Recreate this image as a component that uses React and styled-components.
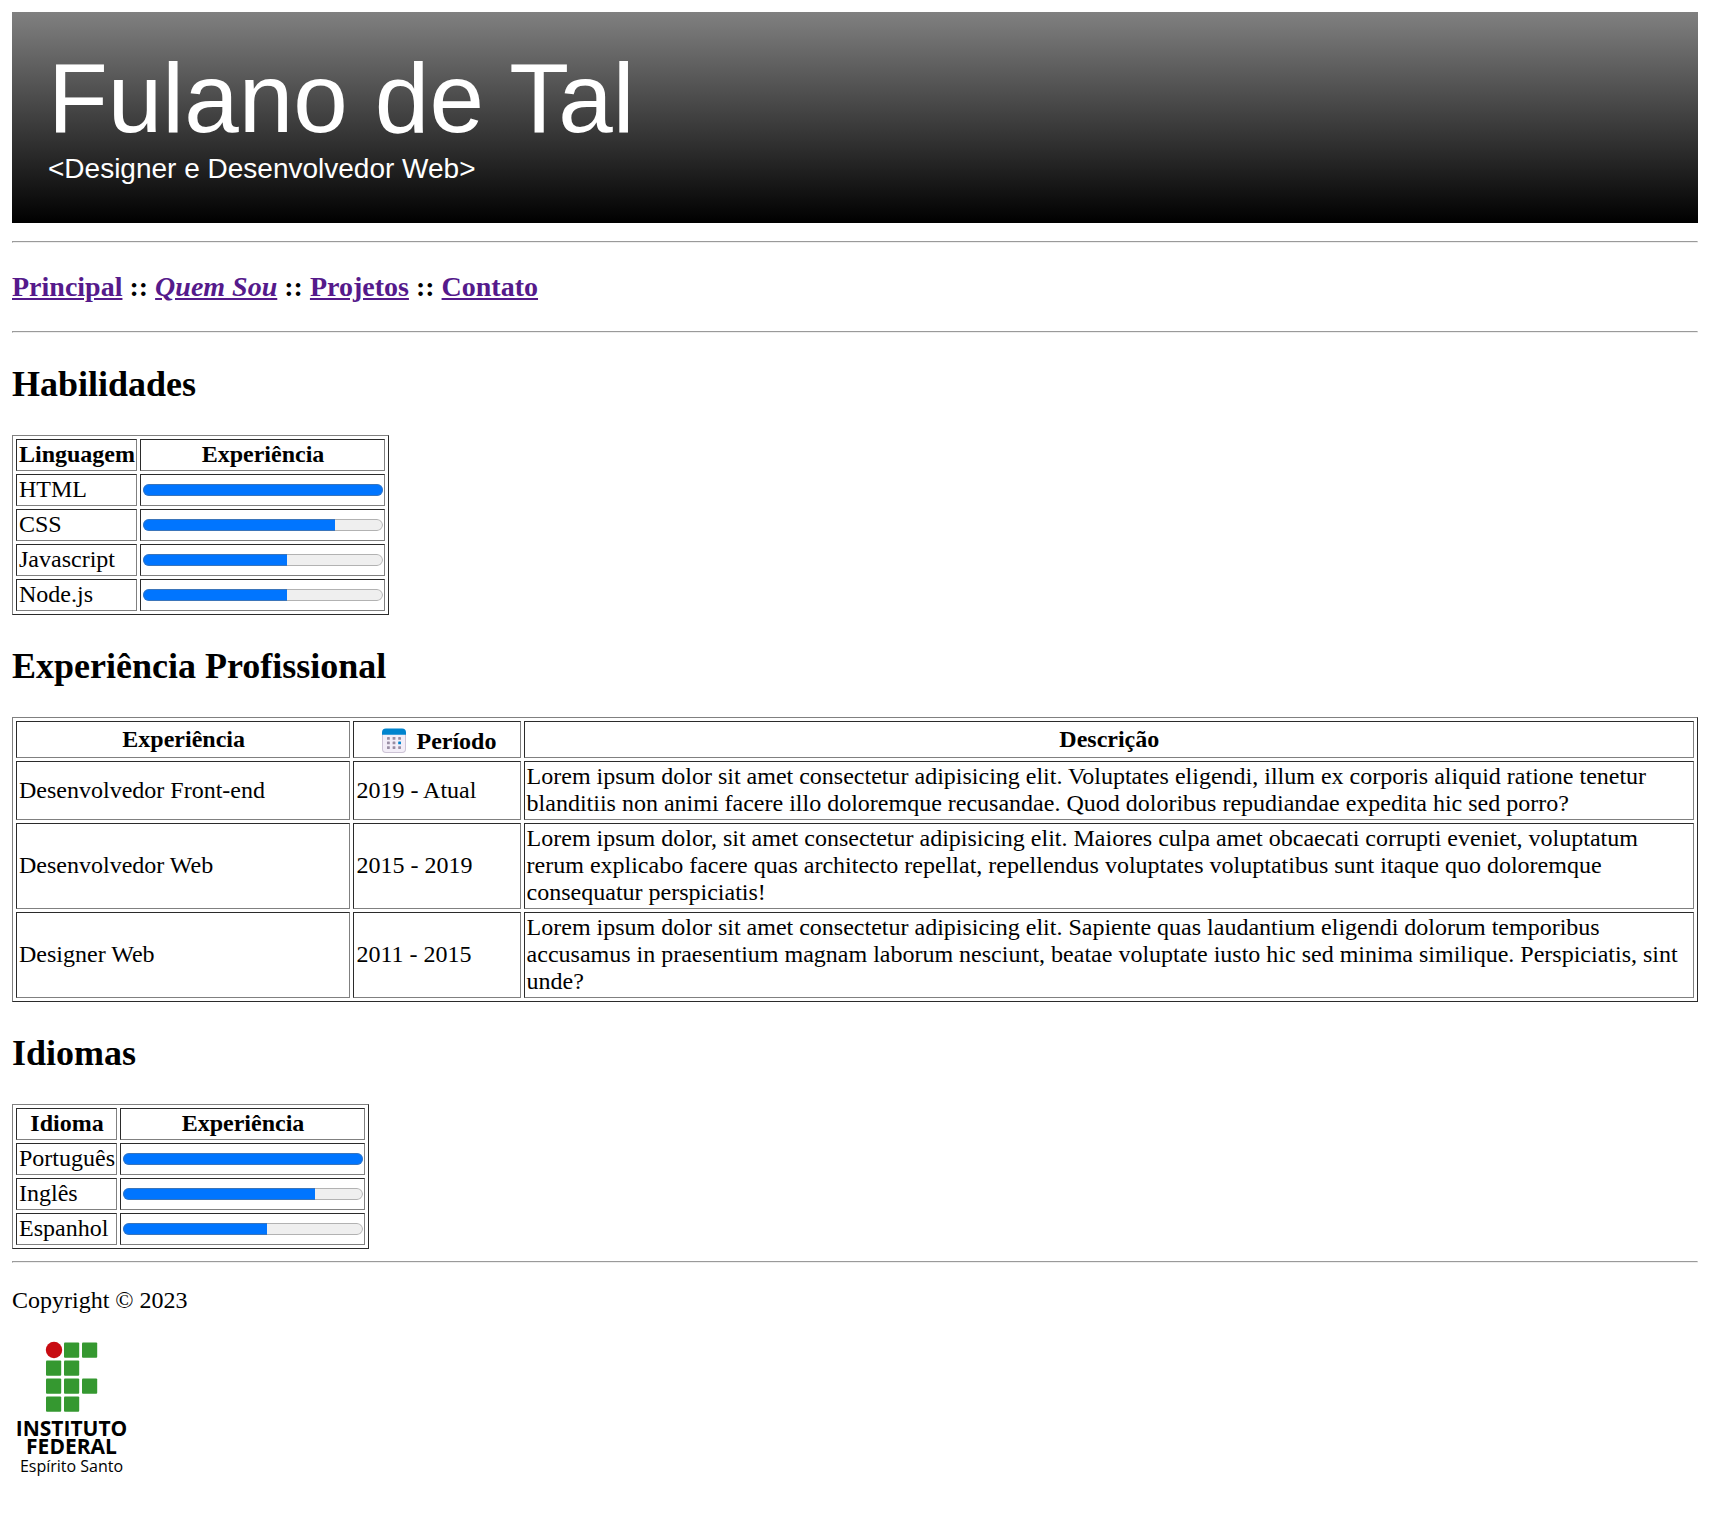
import React from "react";
import styled, { createGlobalStyle } from "styled-components";

const GlobalStyle = createGlobalStyle`
  body {
    margin: 12px;
    background: #fff;
    color: #000;
    font-family: "Liberation Serif", "Times New Roman", serif;
    font-size: 24px;
    line-height: 27px;
  }
`;

const Banner = styled.header`
  padding: 31px 36px 38px;
  background: linear-gradient(gray, #000);
  color: #fff;
  font-family: "Liberation Sans", Arial, sans-serif;
`;

const Name = styled.h1`
  margin: 0;
  font-size: 98px;
  font-weight: 400;
  line-height: 110px;
`;

const Role = styled.p`
  margin: 0;
  font-size: 28px;
  line-height: 32px;
`;

const Rule = styled.hr`
  margin: ${({ $gap = 12 }) => $gap}px 0 0;
  border-width: 1px;
`;

const Nav = styled.nav`
  margin: 28px 0;
  font-size: 28px;
  font-weight: 700;
  line-height: 32px;
`;

const NavLink = styled.a`
  color: #551a8b;
  font-style: ${({ $current }) => ($current ? "italic" : "normal")};
`;

const Heading = styled.h2`
  margin: 30px 0;
  font-size: 36px;
  line-height: 42px;
`;

const Table = styled.table`
  width: ${({ $full }) => ($full ? "100%" : "auto")};
  border: 1px solid;
  border-color: #808080 #2b2b2b #2b2b2b #808080;
  border-spacing: 3px;

  th,
  td {
    padding: 1px 1px 2px 2px;
    border: 1px solid;
    border-color: #2b2b2b #808080 #808080 #2b2b2b;
  }
`;

const Column = styled.col`
  width: ${({ $share }) => $share}%;
`;

const Meter = styled.progress`
  display: block;
  width: 240px;
  height: 24px;
`;

const PeriodLabel = styled.span`
  display: flex;
  align-items: flex-end;
  justify-content: center;
  gap: 6px;
`;

const Copyright = styled.p`
  margin: 24px 0 18px;
`;

const LogoImage = styled.svg`
  display: block;
  width: 120px;
  height: 150px;
  font-family: "Open Sans", "Noto Sans", sans-serif;
`;

const LINKS = ["Principal", "Quem Sou", "Projetos", "Contato"];

const SKILLS = [
  ["HTML", 100],
  ["CSS", 80],
  ["Javascript", 60],
  ["Node.js", 60],
];

const LANGUAGES = [
  ["Português", 100],
  ["Inglês", 80],
  ["Espanhol", 60],
];

const JOBS = [
  {
    role: "Desenvolvedor Front-end",
    period: "2019 - Atual",
    text: "Lorem ipsum dolor sit amet consectetur adipisicing elit. Voluptates eligendi, illum ex corporis aliquid ratione tenetur blanditiis non animi facere illo doloremque recusandae. Quod doloribus repudiandae expedita hic sed porro?",
  },
  {
    role: "Desenvolvedor Web",
    period: "2015 - 2019",
    text: "Lorem ipsum dolor, sit amet consectetur adipisicing elit. Maiores culpa amet obcaecati corrupti eveniet, voluptatum rerum explicabo facere quas architecto repellat, repellendus voluptates voluptatibus sunt itaque quo doloremque consequatur perspiciatis!",
  },
  {
    role: "Designer Web",
    period: "2011 - 2015",
    text: "Lorem ipsum dolor sit amet consectetur adipisicing elit. Sapiente quas laudantium eligendi dolorum temporibus accusamus in praesentium magnam laborum nesciunt, beatae voluptate iusto hic sed minima similique. Perspiciatis, sint unde?",
  },
];

function CalendarIcon() {
  return (
    <svg width="32" height="32" viewBox="0 0 32 32" aria-hidden="true">
      <rect x="4" y="7" width="24" height="23" rx="4" fill="#cdc4d6" />
      <rect x="5" y="7" width="22" height="22" rx="3" fill="#f3eef8" />
      <path d="M4 11.700V9.500a4 4 0 0 1 4-4h16a4 4 0 0 1 4 4v2.200z" fill="#0084ce" />
      {[14, 18.5, 23.2].map((y, row) =>
        [9, 14.6, 20.2].map((x, col) => (
          <rect
            key={`${x}-${y}`}
            x={x}
            y={y}
            width="2.800"
            height="2.800"
            rx="0.4"
            fill={col === 2 && row === 1 ? "#0084ce" : "#998ea4"}
          />
        ))
      )}
    </svg>
  );
}

function Logo() {
  const squares = [
    [1, 0], [2, 0],
    [0, 1], [1, 1],
    [0, 2], [1, 2], [2, 2],
    [0, 3], [1, 3],
  ];
  return (
    <LogoImage viewBox="0 0 120 150" role="img" aria-label="Instituto Federal Espírito Santo">
      <circle cx="42" cy="18" r="8.200" fill="#c80c12" />
      {squares.map(([col, row]) => (
        <rect
          key={`${col}-${row}`}
          x={34 + col * 18}
          y={10.5 + row * 18}
          width="15.200"
          height="15.200"
          rx="1"
          fill="#359830"
        />
      ))}
      <g textAnchor="middle">
        <text x="59.500" y="104" fontSize="21" fontWeight="700">INSTITUTO</text>
        <text x="59.500" y="121.500" fontSize="21" fontWeight="700">FEDERAL</text>
        <text x="59.500" y="140" fontSize="16">Espírito Santo</text>
      </g>
    </LogoImage>
  );
}

function LevelTable({ title, rows }) {
  return (
    <Table>
      <thead>
        <tr>
          <th scope="col">{title}</th>
          <th scope="col">Experiência</th>
        </tr>
      </thead>
      <tbody>
        {rows.map(([name, level]) => (
          <tr key={name}>
            <td>{name}</td>
            <td>
              <Meter max="100" value={level} aria-label={name} />
            </td>
          </tr>
        ))}
      </tbody>
    </Table>
  );
}

export default function App() {
  return (
    <>
      <GlobalStyle />
      <Banner>
        <Name>Fulano de Tal</Name>
        <Role>&lt;Designer e Desenvolvedor Web&gt;</Role>
      </Banner>
      <Rule $gap={18} />
      <Nav>
        {LINKS.map((label, i) => (
          <React.Fragment key={label}>
            {i > 0 && " :: "}
            <NavLink href="#" $current={label === "Quem Sou"}>{label}</NavLink>
          </React.Fragment>
        ))}
      </Nav>
      <Rule />
      <main>
        <Heading>Habilidades</Heading>
        <LevelTable title="Linguagem" rows={SKILLS} />

        <Heading>Experiência Profissional</Heading>
        <Table $full>
          <colgroup>
            <Column $share={20} />
            <Column $share={10} />
            <Column $share={70} />
          </colgroup>
          <thead>
            <tr>
              <th scope="col">Experiência</th>
              <th scope="col">
                <PeriodLabel>
                  <CalendarIcon />
                  Período
                </PeriodLabel>
              </th>
              <th scope="col">Descrição</th>
            </tr>
          </thead>
          <tbody>
            {JOBS.map((job) => (
              <tr key={job.role}>
                <td>{job.role}</td>
                <td>{job.period}</td>
                <td>{job.text}</td>
              </tr>
            ))}
          </tbody>
        </Table>

        <Heading>Idiomas</Heading>
        <LevelTable title="Idioma" rows={LANGUAGES} />
      </main>
      <Rule />
      <footer>
        <Copyright>Copyright © 2023</Copyright>
        <Logo />
      </footer>
    </>
  );
}
